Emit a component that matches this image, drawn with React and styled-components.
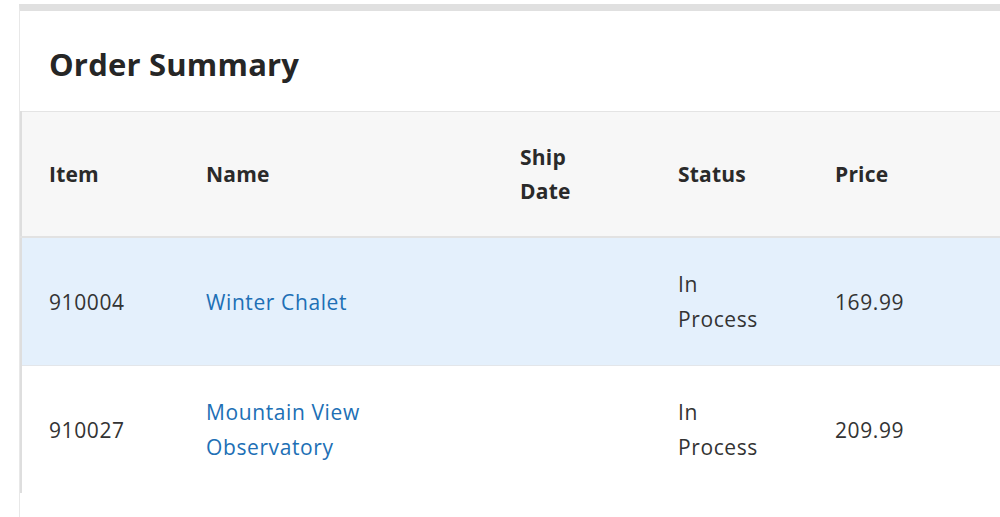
import React from "react";
import styled, { createGlobalStyle } from "styled-components";

const GlobalStyle = createGlobalStyle`
    html, body {
        margin: 0;
        padding: 0;
        background: #ffffff;
        overflow: hidden;
    }
    body {
        font-family: "Open Sans", "Liberation Sans", sans-serif;
        color: #2d2d2d;
    }
`

const Page = styled.div`
    padding: 4px 0 0 19px;
    height: 513px;
`

const Card = styled.section`
    width: 1200px;
    height: 100%;
    border-top: 7px solid #e0e0e0;
    border-left: 1px solid #e8e8e8;
    background: #ffffff;
`

const Title = styled.h2`
    margin: 0;
    height: 100px;
    box-sizing: border-box;
    display: flex;
    align-items: center;
    padding: 6px 0 0 29px;
    font-size: 31px;
    font-weight: 700;
    color: #262626;
    letter-spacing: 0.2px;
`

const Table = styled.table`
    border-collapse: collapse;
    table-layout: fixed;
    width: 1100px;
    border-top: 1px solid #e4e4e4;
    border-left: 2px solid #dedede;
    font-size: 21px;
`

const Head = styled.thead`
    background: #f7f7f7;
`

const Th = styled.th`
    text-align: left;
    vertical-align: middle;
    padding: 28px 50px 28px 27px;
    font-weight: 700;
    line-height: 34px;
    color: #2a2a2a;
    letter-spacing: 0.2px;
    border-bottom: 2px solid #e2e2e2;
`

const Row = styled.tr`
    background: ${props => props.highlight ? "#e4f0fc" : "#ffffff"};
    border-bottom: 1px solid #e3e6ea;

    &:last-child {
        border-bottom: none;
    }
`

const Td = styled.td`
    vertical-align: middle;
    padding: 29px 50px 28px 27px;
    line-height: 35px;
    color: #333333;
    letter-spacing: 0.6px;
`

const Link = styled.a`
    color: #206fb5;
    text-decoration: none;
`

const orders = [
    {item: "910004", name: "Winter Chalet", ship: "", status: "In Process", price: "169.99"},
    {item: "910027", name: "Mountain View Observatory", ship: "", status: "In Process", price: "209.99"},
];

export default function App() {
    return (
        <Page>
            <GlobalStyle/>
            <Card>
                <Title>Order Summary</Title>
                <Table>
                    <colgroup>
                        <col style={{width: 158}}/>
                        <col style={{width: 314}}/>
                        <col style={{width: 158}}/>
                        <col style={{width: 157}}/>
                        <col style={{width: 158}}/>
                        <col/>
                    </colgroup>
                    <Head>
                        <tr>
                            <Th>Item</Th>
                            <Th>Name</Th>
                            <Th>Ship Date</Th>
                            <Th>Status</Th>
                            <Th>Price</Th>
                            <Th></Th>
                        </tr>
                    </Head>
                    <tbody>
                        {orders.map((o, i) => (
                            <Row key={o.item} highlight={i === 0}>
                                <Td>{o.item}</Td>
                                <Td><Link href="#">{o.name}</Link></Td>
                                <Td>{o.ship}</Td>
                                <Td>{o.status}</Td>
                                <Td>{o.price}</Td>
                                <Td></Td>
                            </Row>
                        ))}
                    </tbody>
                </Table>
            </Card>
        </Page>
    );
}
